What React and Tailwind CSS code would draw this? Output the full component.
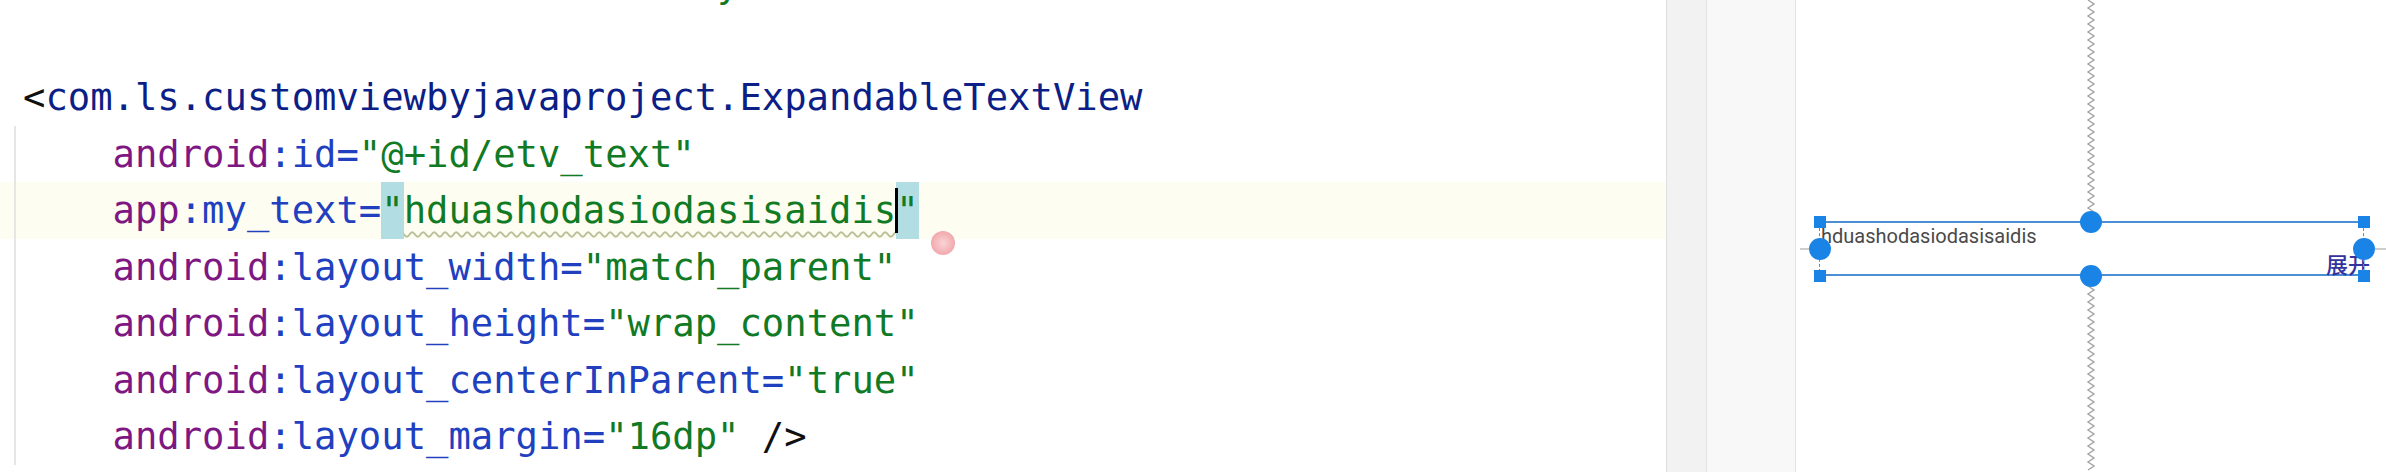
import React from "react";

const C = {
  ink: "text-[#101010]",
  tag: "text-[#0b1f86]",
  ns: "text-[#7f1783]",
  attr: "text-[#2140c0]",
  val: "text-[#107a24]",
};

// one editor line: [gutter cell][code]
const Line = ({ guide, current, children }) => (
  <div className={`flex h-[56.5px] leading-[56.5px] whitespace-pre ${current ? "bg-[#fdfdf1]" : ""}`}>
    <span className="w-[23px] shrink-0 flex">
      {guide && <span className="ml-[14px] border-l-2 border-[#e6e6e6]" />}
    </span>
    <span>{children}</span>
  </div>
);

const Attr = ({ ns, name, value, tail }) => (
  <>
    {"    "}
    <span className={C.ns}>{ns}</span>
    <span className={C.attr}>:{name}=</span>
    <span className={C.val}>"{value}"</span>
    {tail && <span className={C.ink}>{tail}</span>}
  </>
);

const zig = (y0, y1, x) => {
  const pts = [];
  let i = 0;
  for (let y = y0; y <= y1; y += 4) {
    pts.push(`${i % 2 ? x + 3 : x - 3},${y}`);
    i++;
  }
  return pts.join(" ");
};

const Square = ({ className }) => (
  <div className={`absolute w-[12px] h-[12px] bg-[#1a84e6] ${className}`} />
);
const Dot = ({ className }) => (
  <div className={`absolute w-[22px] h-[22px] rounded-full bg-[#1a84e6] ${className}`} />
);

export default function App() {
  return (
    <div className="flex w-[2386px] h-[472px] overflow-hidden bg-white">
      {/* code editor */}
      <div className="relative w-[1666px] shrink-0 overflow-hidden font-['DejaVu_Sans_Mono',monospace] text-[37.2px]">
        <div className="-mt-[44px]">
          <Line>
            <Attr ns="tools" name="context" value=".MainActivity" tail=">" />
          </Line>
          <Line />
          <Line>
            <span className={C.ink}>&lt;</span>
            <span className={C.tag}>com.ls.customviewbyjavaproject.ExpandableTextView</span>
          </Line>
          <Line guide>
            <Attr ns="android" name="id" value="@+id/etv_text" />
          </Line>
          <Line guide current>
            {"    "}
            <span className={C.ns}>app</span>
            <span className={C.attr}>:my_text=</span>
            <span className={`inline-block bg-[#b2dde2] ${C.val}`}>"</span>
            <span className={`${C.val} underline decoration-wavy decoration-[#b9c09a] decoration-[1.5px] underline-offset-[8px]`}>
              hduashodasiodasisaidis
            </span>
            <span className={`relative inline-block bg-[#b2dde2] ${C.val}`}>
              <span className="absolute left-[-1px] top-[6px] bottom-[6px] w-[3px] bg-black" />"
            </span>
          </Line>
          <Line guide>
            <Attr ns="android" name="layout_width" value="match_parent" />
          </Line>
          <Line guide>
            <Attr ns="android" name="layout_height" value="wrap_content" />
          </Line>
          <Line guide>
            <Attr ns="android" name="layout_centerInParent" value="true" />
          </Line>
          <Line guide>
            <Attr ns="android" name="layout_margin" value="16dp" tail=" />" />
          </Line>
        </div>
        {/* click indicator */}
        <div className="absolute left-[931px] top-[231px] w-[24px] h-[24px] rounded-full bg-[radial-gradient(circle,#f9cfd1_0%,#f1a3a8_65%,#e98c93_100%)] opacity-90" />
      </div>

      {/* side strips */}
      <div className="w-[40px] shrink-0 bg-[#f2f2f2] border-l border-[#dedede]" />
      <div className="w-[90px] shrink-0 bg-[#f8f8f8] border-l border-r border-[#e2e2e2]" />

      {/* design preview */}
      <div className="relative flex-1">
        <svg className="absolute inset-0" width="590" height="472">
          <polyline points={zig(0, 212, 295)} fill="none" stroke="#a3a3a3" strokeWidth="1.4" />
          <polyline points={zig(286, 472, 295)} fill="none" stroke="#a3a3a3" strokeWidth="1.4" />
          <line x1="4" y1="249" x2="14" y2="249" stroke="#bdbdbd" strokeWidth="1.5" />
          <line x1="578" y1="249" x2="590" y2="249" stroke="#bdbdbd" strokeWidth="1.5" />
        </svg>

        {/* the selected ExpandableTextView */}
        <div className="absolute left-[24px] top-[221px] w-[544px] h-[55px] flex flex-col justify-between border-y-2 border-[#4a8fd4] font-['Roboto',sans-serif]">
          <div className="text-[20px] leading-[26px] text-[#4a4a4a] pl-[1px]">hduashodasiodasisaidis</div>
          <div className="self-end -mr-[6px] -mb-[2px] text-[22px] leading-[26px] font-medium text-[#33339e] font-['Noto_Sans_CJK_SC',sans-serif]">展开</div>
        </div>
        <div className="absolute left-[23px] top-[228px] h-[44px] border-l border-dashed border-[#4a8fd4]" />
        <div className="absolute left-[567px] top-[228px] h-[44px] border-l border-dashed border-[#4a8fd4]" />

        <Square className="left-[18px] top-[216px]" />
        <Square className="left-[18px] top-[270px]" />
        <Square className="left-[562px] top-[216px]" />
        <Square className="left-[562px] top-[270px]" />
        <Dot className="left-[13px] top-[238px]" />
        <Dot className="left-[557px] top-[238px]" />
        <Dot className="left-[284px] top-[211px]" />
        <Dot className="left-[284px] top-[265px]" />
      </div>
    </div>
  );
}
